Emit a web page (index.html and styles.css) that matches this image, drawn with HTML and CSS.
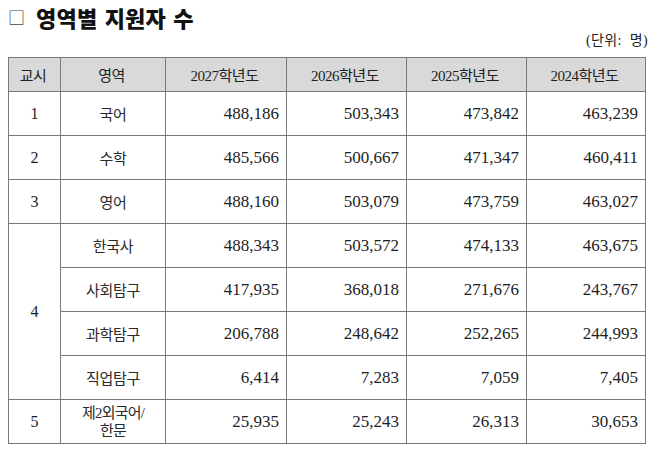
FILE: index.html
```html
<!DOCTYPE html>
<html lang="ko">
<head>
<meta charset="utf-8">
<link rel="stylesheet" href="styles.css">
</head>
<body>
<div class="page">
  <h1 class="title"><span class="box">□</span>영역별 지원자 수</h1>
  <div class="unit">(단위:&nbsp; 명)</div>
  <table class="grid">
    <colgroup>
      <col class="c0"><col class="c1"><col class="c2"><col class="c3"><col class="c4"><col class="c5">
    </colgroup>
    <thead>
      <tr><th>교시</th><th>영역</th><th>2027학년도</th><th>2026학년도</th><th>2025학년도</th><th>2024학년도</th></tr>
    </thead>
    <tbody>
      <tr><td class="ctr">1</td><td class="ctr sub">국어</td><td>488,186</td><td>503,343</td><td>473,842</td><td>463,239</td></tr>
      <tr><td class="ctr">2</td><td class="ctr sub">수학</td><td>485,566</td><td>500,667</td><td>471,347</td><td>460,411</td></tr>
      <tr><td class="ctr">3</td><td class="ctr sub">영어</td><td>488,160</td><td>503,079</td><td>473,759</td><td>463,027</td></tr>
      <tr><td class="ctr" rowspan="4">4</td><td class="ctr sub">한국사</td><td>488,343</td><td>503,572</td><td>474,133</td><td>463,675</td></tr>
      <tr><td class="ctr sub">사회탐구</td><td>417,935</td><td>368,018</td><td>271,676</td><td>243,767</td></tr>
      <tr><td class="ctr sub">과학탐구</td><td>206,788</td><td>248,642</td><td>252,265</td><td>244,993</td></tr>
      <tr><td class="ctr sub">직업탐구</td><td>6,414</td><td>7,283</td><td>7,059</td><td>7,405</td></tr>
      <tr><td class="ctr">5</td><td class="ctr sub two">제2외국어/<br>한문</td><td>25,935</td><td>25,243</td><td>26,313</td><td>30,653</td></tr>
    </tbody>
  </table>
</div>
</body>
</html>
```

FILE: styles.css
```css
html, body {
  margin: 0;
  padding: 0;
  background: #ffffff;
}

.page {
  width: 658px;
  height: 456px;
  box-sizing: border-box;
  padding: 4px 10px 0 8px;
  color: #1e1e1e;
  font-family: "Liberation Serif", "Noto Sans CJK KR", serif;
}

.title {
  margin: 0;
  height: 26px;
  display: flex;
  align-items: center;
  font-family: "Noto Sans CJK KR", sans-serif;
  font-size: 22px;
  font-weight: 900;
  line-height: 26px;
  letter-spacing: 0.2px;
  word-spacing: 1px;
  color: #111;
}

.box {
  font-weight: 400;
  font-size: 17px;
  color: #444;
  margin-right: 11px;
  letter-spacing: 0;
}

.unit {
  text-align: right;
  font-size: 14px;
  line-height: 16px;
  margin-top: 3px;
  height: 24px;
  letter-spacing: 0.4px;
  color: #222;
}

.grid {
  border-collapse: collapse;
  width: 637px;
  table-layout: fixed;
  border: 1px solid #6e6e6e;
}

.c0 { width: 52px; }
.c1 { width: 105px; }
.c2 { width: 121px; }
.c3 { width: 120px; }
.c4 { width: 120px; }
.c5 { width: 119px; }

.grid th,
.grid td {
  border: 1px solid #7a7a7a;
  padding: 0 7px 0 4px;
}

.grid thead tr {
  height: 34px;
}

.grid th {
  background: #d9d9d9;
  font-weight: 400;
  font-size: 15px;
  letter-spacing: -0.5px;
  text-align: center;
  color: #222;
}

.grid tbody tr {
  height: 44px;
}

.grid td {
  text-align: right;
  font-size: 17px;
  color: #1e1e1e;
}

.grid td.ctr {
  text-align: center;
  padding: 0 4px;
  font-size: 16px;
}

.grid td.sub {
  font-size: 15px;
  letter-spacing: -0.3px;
  color: #2a2a2a;
}

.grid td.two {
  line-height: 18px;
  letter-spacing: -0.8px;
}
```
